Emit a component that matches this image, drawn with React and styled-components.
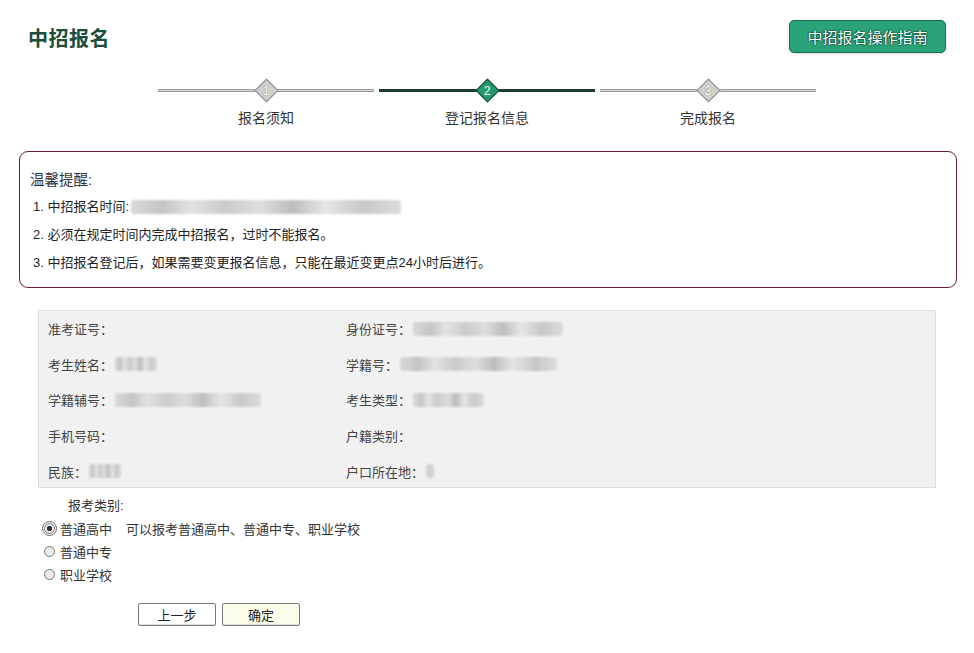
import styled, { createGlobalStyle } from "styled-components";

const GlobalStyle = createGlobalStyle`
  body {
    margin: 0;
    background: #fff;
    font-family: "Liberation Sans", "Noto Sans CJK SC", sans-serif;
    color: #333;
  }
`;

const steps = [
  { num: 1, label: "报名须知" },
  { num: 2, label: "登记报名信息", active: true },
  { num: 3, label: "完成报名" },
];

const infoRows = [
  [
    { label: "准考证号：" },
    { label: "身份证号：", blur: 150 },
  ],
  [
    { label: "考生姓名：", blur: 42 },
    { label: "学籍号：", blur: 157 },
  ],
  [
    { label: "学籍辅号：", blur: 146 },
    { label: "考生类型：", blur: 71 },
  ],
  [{ label: "手机号码：" }, { label: "户籍类别：" }],
  [
    { label: "民族：", blur: 32 },
    { label: "户口所在地：", blur: 8 },
  ],
];

const options = [
  { text: "普通高中", checked: true, note: "可以报考普通高中、普通中专、职业学校" },
  { text: "普通中专" },
  { text: "职业学校" },
];

const App = () => {
  return (
    <Page>
      <GlobalStyle />
      <Header>
        <Title>中招报名</Title>
        <GuideButton type="button">中招报名操作指南</GuideButton>
      </Header>

      <Steps>
        {steps.map((s) => (
          <Step key={s.num}>
            <Track>
              <Line $active={s.active} />
              <Diamond $active={s.active}>
                <span>{s.num}</span>
              </Diamond>
            </Track>
            <StepLabel>{s.label}</StepLabel>
          </Step>
        ))}
      </Steps>

      <Notice>
        <NoticeTitle>温馨提醒:</NoticeTitle>
        <NoticeItem>
          1. 中招报名时间: <Blur $w={270} />
        </NoticeItem>
        <NoticeItem>2. 必须在规定时间内完成中招报名，过时不能报名。</NoticeItem>
        <NoticeItem>
          3. 中招报名登记后，如果需要变更报名信息，只能在最近变更点24小时后进行。
        </NoticeItem>
      </Notice>

      <InfoPanel>
        {infoRows.map((row, i) =>
          row.map((cell, j) => (
            <InfoCell key={`${i}-${j}`}>
              {cell.label}
              {cell.blur && <Blur $w={cell.blur} />}
            </InfoCell>
          ))
        )}
      </InfoPanel>

      <Category>
        <CategoryLabel>报考类别:</CategoryLabel>
        {options.map((o) => (
          <Option key={o.text}>
            <Radio $checked={o.checked} />
            {o.text}
            {o.note && <Note>{o.note}</Note>}
          </Option>
        ))}
      </Category>

      <Actions>
        <ActionButton type="button">上一步</ActionButton>
        <ActionButton type="button" $primary>
          确定
        </ActionButton>
      </Actions>
    </Page>
  );
};

const Page = styled.div`
  width: 974px;
  height: 653px;
  overflow: hidden;
  font-size: 13px;
`;

const Header = styled.header`
  display: flex;
  justify-content: space-between;
  align-items: flex-start;
  padding: 20px 28px 0 28px;
  height: 34px;
`;

const Title = styled.h1`
  margin: 3px 0 0;
  font-size: 20px;
  font-weight: bold;
  color: #1d4e3b;
  letter-spacing: 0.5px;
`;

const GuideButton = styled.button`
  width: 157px;
  height: 33px;
  background: #29a377;
  border: 1px solid #1c6d50;
  border-radius: 5px;
  color: #fff;
  font-family: inherit;
  font-size: 15px;
  text-shadow: 0 0 2px #0d3a2a, 0 0 1px #0d3a2a, 0 0 1px #0d3a2a;
  box-shadow: 0 1px 3px rgba(0, 0, 0, 0.15);
  padding: 0;
`;

const Steps = styled.div`
  display: flex;
  gap: 5px;
  margin: 25px 0 0 158px;
  width: 658px;
`;

const Step = styled.div`
  flex: 1;
  display: flex;
  flex-direction: column;
  align-items: center;
`;

const Track = styled.div`
  position: relative;
  width: 100%;
  height: 22px;
  display: flex;
  align-items: center;
  justify-content: center;
`;

const Line = styled.div`
  width: 100%;
  height: 3px;
  background: ${(p) => (p.$active ? "#1e3a33" : "#d8d8d8")};
  border-top: 1px solid ${(p) => (p.$active ? "#1e3a33" : "#9a9a9a")};
  border-bottom: 1px solid ${(p) => (p.$active ? "#1e3a33" : "#9a9a9a")};
  box-sizing: border-box;
`;

const Diamond = styled.div`
  position: absolute;
  width: 15px;
  height: 15px;
  transform: rotate(45deg);
  background: ${(p) => (p.$active ? "#239a6c" : "#cfcfcf")};
  border: 1px solid ${(p) => (p.$active ? "#174f3a" : "#8e8e8e")};
  display: flex;
  align-items: center;
  justify-content: center;

  span {
    transform: rotate(-45deg);
    font-size: 12px;
    line-height: 1;
    color: #fff;
    text-shadow: ${(p) =>
      p.$active ? "none" : "0 0 1px #888, 0 0 1px #888"};
  }
`;

const StepLabel = styled.div`
  margin-top: 6px;
  font-size: 14px;
  color: #333;
`;

const Notice = styled.div`
  margin: 24px 17px 0 19px;
  height: 137px;
  box-sizing: border-box;
  border: 1.5px solid #6e1e2c;
  border-radius: 9px;
  padding: 18px 0 0 10px;
`;

const NoticeTitle = styled.div`
  font-size: 14.5px;
  line-height: 20px;
  color: #333;
  margin-bottom: 3px;
`;

const NoticeItem = styled.div`
  display: flex;
  align-items: center;
  font-size: 13px;
  line-height: 20px;
  height: 28px;
  padding-left: 3px;
  color: #222;
`;

const Blur = styled.span`
  display: inline-block;
  width: ${(p) => p.$w}px;
  height: 14px;
  margin-left: 2px;
  border-radius: 3px;
  filter: blur(1.2px);
  background: linear-gradient(
    90deg,
    #d9d9d9 0%,
    #c4c4c4 12%,
    #e3e3e3 22%,
    #cbcbcb 35%,
    #dedede 48%,
    #bdbdbd 60%,
    #e6e6e6 72%,
    #c8c8c8 86%,
    #dcdcdc 100%
  );
`;

const InfoPanel = styled.div`
  margin: 22px 0 0 38px;
  width: 898px;
  height: 178px;
  box-sizing: border-box;
  background: #f1f1f1;
  border: 1px solid #dedede;
  padding: 0 0 0 9px;
  display: grid;
  grid-template-columns: 298px 1fr;
  grid-auto-rows: 35.6px;
  align-items: center;
`;

const InfoCell = styled.div`
  display: flex;
  align-items: center;
  font-size: 13px;
  color: #444;
`;

const Category = styled.div`
  margin: 7px 0 0 42px;
  display: flex;
  flex-direction: column;
`;

const CategoryLabel = styled.div`
  margin-left: 26px;
  height: 22px;
  line-height: 22px;
  font-size: 13px;
  color: #333;
`;

const Option = styled.label`
  display: flex;
  align-items: center;
  height: 23px;
  font-size: 13px;
  color: #333;
`;

const Radio = styled.span`
  width: 9px;
  height: 9px;
  border-radius: 50%;
  border: 1px solid #777;
  background: ${(p) =>
    p.$checked
      ? "radial-gradient(circle, #333 0 2.5px, #eee 3px)"
      : "#eaeaea"};
  margin: 0 5px 0 2px;
  outline: ${(p) => (p.$checked ? "1px solid #666" : "none")};
  outline-offset: 1px;
`;

const Note = styled.span`
  margin-left: 14px;
`;

const Actions = styled.div`
  display: flex;
  gap: 6px;
  margin: 17px 0 0 138px;
`;

const ActionButton = styled.button`
  width: 78px;
  height: 23px;
  padding: 0;
  font-family: inherit;
  font-size: 13px;
  color: #222;
  background: ${(p) => (p.$primary ? "#fbfbe9" : "#fff")};
  border: 1px solid #777;
  border-radius: 2px;
  box-shadow: inset 0 -1px 0 #ddd;
`;

export default App;
